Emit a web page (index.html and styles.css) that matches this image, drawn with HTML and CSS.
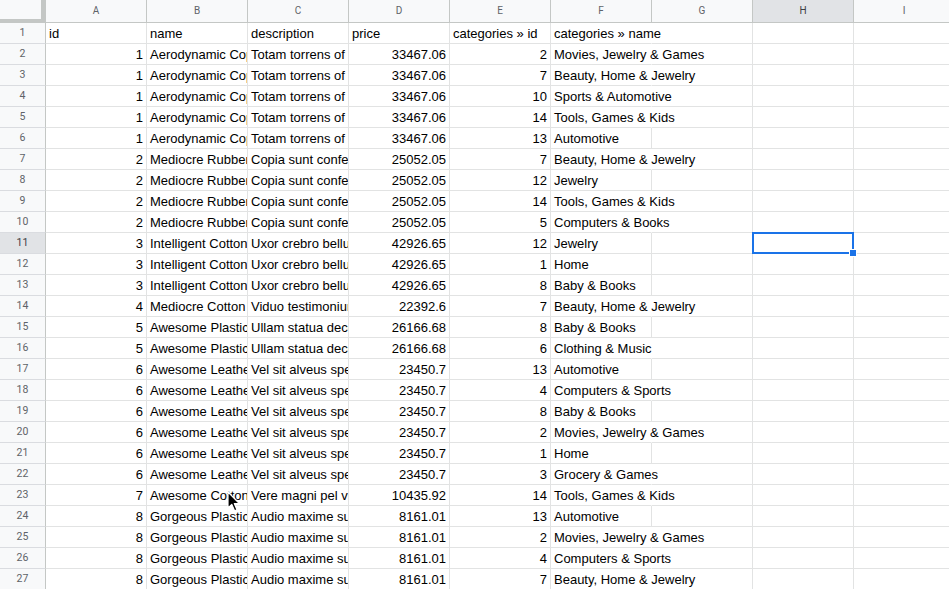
FILE: index.html
```html
<!DOCTYPE html>
<html>
<head>
<meta charset="utf-8">
<link rel="stylesheet" href="styles.css">
</head>
<body>
<div class="sheet">
  <div class="hrow">
    <div class="corner"></div>
    <div class="ch">A</div><div class="ch">B</div><div class="ch">C</div><div class="ch">D</div><div class="ch">E</div><div class="ch">F</div><div class="ch">G</div><div class="ch sel">H</div><div class="ch">I</div>
  </div>
  <div class="row"><div class="rh">1</div><div class="c">id</div><div class="c">name</div><div class="c">description</div><div class="c">price</div><div class="c">categories » id</div><div class="c sp">categories » name</div><div class="c"></div><div class="c"></div><div class="c"></div></div>
  <div class="row"><div class="rh">2</div><div class="c n">1</div><div class="c">Aerodynamic Copper Table</div><div class="c">Totam torrens of vel</div><div class="c n">33467.06</div><div class="c n">2</div><div class="c sp">Movies, Jewelry &amp; Games</div><div class="c"></div><div class="c"></div><div class="c"></div></div>
  <div class="row"><div class="rh">3</div><div class="c n">1</div><div class="c">Aerodynamic Copper Table</div><div class="c">Totam torrens of vel</div><div class="c n">33467.06</div><div class="c n">7</div><div class="c sp">Beauty, Home &amp; Jewelry</div><div class="c"></div><div class="c"></div><div class="c"></div></div>
  <div class="row"><div class="rh">4</div><div class="c n">1</div><div class="c">Aerodynamic Copper Table</div><div class="c">Totam torrens of vel</div><div class="c n">33467.06</div><div class="c n">10</div><div class="c sp">Sports &amp; Automotive</div><div class="c"></div><div class="c"></div><div class="c"></div></div>
  <div class="row"><div class="rh">5</div><div class="c n">1</div><div class="c">Aerodynamic Copper Table</div><div class="c">Totam torrens of vel</div><div class="c n">33467.06</div><div class="c n">14</div><div class="c sp">Tools, Games &amp; Kids</div><div class="c"></div><div class="c"></div><div class="c"></div></div>
  <div class="row"><div class="rh">6</div><div class="c n">1</div><div class="c">Aerodynamic Copper Table</div><div class="c">Totam torrens of vel</div><div class="c n">33467.06</div><div class="c n">13</div><div class="c">Automotive</div><div class="c"></div><div class="c"></div><div class="c"></div></div>
  <div class="row"><div class="rh">7</div><div class="c n">2</div><div class="c">Mediocre Rubber Bag</div><div class="c">Copia sunt confero</div><div class="c n">25052.05</div><div class="c n">7</div><div class="c sp">Beauty, Home &amp; Jewelry</div><div class="c"></div><div class="c"></div><div class="c"></div></div>
  <div class="row"><div class="rh">8</div><div class="c n">2</div><div class="c">Mediocre Rubber Bag</div><div class="c">Copia sunt confero</div><div class="c n">25052.05</div><div class="c n">12</div><div class="c">Jewelry</div><div class="c"></div><div class="c"></div><div class="c"></div></div>
  <div class="row"><div class="rh">9</div><div class="c n">2</div><div class="c">Mediocre Rubber Bag</div><div class="c">Copia sunt confero</div><div class="c n">25052.05</div><div class="c n">14</div><div class="c sp">Tools, Games &amp; Kids</div><div class="c"></div><div class="c"></div><div class="c"></div></div>
  <div class="row"><div class="rh">10</div><div class="c n">2</div><div class="c">Mediocre Rubber Bag</div><div class="c">Copia sunt confero</div><div class="c n">25052.05</div><div class="c n">5</div><div class="c sp">Computers &amp; Books</div><div class="c"></div><div class="c"></div><div class="c"></div></div>
  <div class="row"><div class="rh sel">11</div><div class="c n">3</div><div class="c">Intelligent Cotton Pants</div><div class="c">Uxor crebro bellum</div><div class="c n">42926.65</div><div class="c n">12</div><div class="c">Jewelry</div><div class="c"></div><div class="c"></div><div class="c"></div></div>
  <div class="row"><div class="rh">12</div><div class="c n">3</div><div class="c">Intelligent Cotton Pants</div><div class="c">Uxor crebro bellum</div><div class="c n">42926.65</div><div class="c n">1</div><div class="c">Home</div><div class="c"></div><div class="c"></div><div class="c"></div></div>
  <div class="row"><div class="rh">13</div><div class="c n">3</div><div class="c">Intelligent Cotton Pants</div><div class="c">Uxor crebro bellum</div><div class="c n">42926.65</div><div class="c n">8</div><div class="c">Baby &amp; Books</div><div class="c"></div><div class="c"></div><div class="c"></div></div>
  <div class="row"><div class="rh">14</div><div class="c n">4</div><div class="c">Mediocre Cotton Shirt</div><div class="c">Viduo testimonium</div><div class="c n">22392.6</div><div class="c n">7</div><div class="c sp">Beauty, Home &amp; Jewelry</div><div class="c"></div><div class="c"></div><div class="c"></div></div>
  <div class="row"><div class="rh">15</div><div class="c n">5</div><div class="c">Awesome Plastic Car</div><div class="c">Ullam statua decor</div><div class="c n">26166.68</div><div class="c n">8</div><div class="c">Baby &amp; Books</div><div class="c"></div><div class="c"></div><div class="c"></div></div>
  <div class="row"><div class="rh">16</div><div class="c n">5</div><div class="c">Awesome Plastic Car</div><div class="c">Ullam statua decor</div><div class="c n">26166.68</div><div class="c n">6</div><div class="c sp">Clothing &amp; Music</div><div class="c"></div><div class="c"></div><div class="c"></div></div>
  <div class="row"><div class="rh">17</div><div class="c n">6</div><div class="c">Awesome Leather Hat</div><div class="c">Vel sit alveus spes</div><div class="c n">23450.7</div><div class="c n">13</div><div class="c">Automotive</div><div class="c"></div><div class="c"></div><div class="c"></div></div>
  <div class="row"><div class="rh">18</div><div class="c n">6</div><div class="c">Awesome Leather Hat</div><div class="c">Vel sit alveus spes</div><div class="c n">23450.7</div><div class="c n">4</div><div class="c sp">Computers &amp; Sports</div><div class="c"></div><div class="c"></div><div class="c"></div></div>
  <div class="row"><div class="rh">19</div><div class="c n">6</div><div class="c">Awesome Leather Hat</div><div class="c">Vel sit alveus spes</div><div class="c n">23450.7</div><div class="c n">8</div><div class="c">Baby &amp; Books</div><div class="c"></div><div class="c"></div><div class="c"></div></div>
  <div class="row"><div class="rh">20</div><div class="c n">6</div><div class="c">Awesome Leather Hat</div><div class="c">Vel sit alveus spes</div><div class="c n">23450.7</div><div class="c n">2</div><div class="c sp">Movies, Jewelry &amp; Games</div><div class="c"></div><div class="c"></div><div class="c"></div></div>
  <div class="row"><div class="rh">21</div><div class="c n">6</div><div class="c">Awesome Leather Hat</div><div class="c">Vel sit alveus spes</div><div class="c n">23450.7</div><div class="c n">1</div><div class="c">Home</div><div class="c"></div><div class="c"></div><div class="c"></div></div>
  <div class="row"><div class="rh">22</div><div class="c n">6</div><div class="c">Awesome Leather Hat</div><div class="c">Vel sit alveus spes</div><div class="c n">23450.7</div><div class="c n">3</div><div class="c sp">Grocery &amp; Games</div><div class="c"></div><div class="c"></div><div class="c"></div></div>
  <div class="row"><div class="rh">23</div><div class="c n">7</div><div class="c">Awesome Cotton Chair</div><div class="c">Vere magni pel vir</div><div class="c n">10435.92</div><div class="c n">14</div><div class="c sp">Tools, Games &amp; Kids</div><div class="c"></div><div class="c"></div><div class="c"></div></div>
  <div class="row"><div class="rh">24</div><div class="c n">8</div><div class="c">Gorgeous Plastic Lamp</div><div class="c">Audio maxime sumo</div><div class="c n">8161.01</div><div class="c n">13</div><div class="c">Automotive</div><div class="c"></div><div class="c"></div><div class="c"></div></div>
  <div class="row"><div class="rh">25</div><div class="c n">8</div><div class="c">Gorgeous Plastic Lamp</div><div class="c">Audio maxime sumo</div><div class="c n">8161.01</div><div class="c n">2</div><div class="c sp">Movies, Jewelry &amp; Games</div><div class="c"></div><div class="c"></div><div class="c"></div></div>
  <div class="row"><div class="rh">26</div><div class="c n">8</div><div class="c">Gorgeous Plastic Lamp</div><div class="c">Audio maxime sumo</div><div class="c n">8161.01</div><div class="c n">4</div><div class="c sp">Computers &amp; Sports</div><div class="c"></div><div class="c"></div><div class="c"></div></div>
  <div class="row"><div class="rh">27</div><div class="c n">8</div><div class="c">Gorgeous Plastic Lamp</div><div class="c">Audio maxime sumo</div><div class="c n">8161.01</div><div class="c n">7</div><div class="c sp">Beauty, Home &amp; Jewelry</div><div class="c"></div><div class="c"></div><div class="c"></div></div>

  <div class="selbox"><div class="handle"></div></div>
  <svg class="cursor" width="14" height="22" viewBox="0 0 14 22">
    <path d="M1 1 L1 17 L4.8 13.4 L7.6 19.8 L10 18.8 L7.3 12.6 L12.4 12.6 Z" fill="#000" stroke="#fff" stroke-width="1.2" stroke-linejoin="round"/>
  </svg>
</div>
</body>
</html>
```
FILE: styles.css
```css
* { box-sizing: border-box; }
html, body {
  margin: 0;
  padding: 0;
  background: #fff;
  overflow: hidden;
}
body {
  width: 949px;
  height: 589px;
}
.sheet {
  position: relative;
  width: 955px;
  font-family: "Liberation Sans", Arial, sans-serif;
}
.hrow {
  display: flex;
  height: 23px;
}
.corner {
  flex: 0 0 46px;
  height: 23px;
  background: #f8f9fa;
  border-right: 5px solid #c4c7c5;
  border-bottom: 4px solid #c4c7c5;
}
.ch {
  flex: 0 0 101px;
  min-width: 0;
  height: 23px;
  background: #f8f9fa;
  border-right: 1px solid #c4c7c5;
  border-bottom: 1px solid #c4c7c5;
  color: #5f6368;
  font-family: Roboto, "Liberation Sans", Arial, sans-serif;
  font-size: 10px;
  line-height: 22px;
  text-align: center;
}
.ch.sel {
  background: #e1e3e6;
  color: #3c4043;
}
.row {
  display: flex;
  height: 21px;
}
.rh {
  flex: 0 0 46px;
  height: 21px;
  background: #f8f9fa;
  border-right: 1px solid #c4c7c5;
  border-bottom: 1px solid #dadce0;
  color: #5f6368;
  font-family: Roboto, "Liberation Sans", Arial, sans-serif;
  font-size: 10.5px;
  line-height: 20px;
  text-align: center;
}
.rh.sel {
  background: #e1e3e6;
  color: #3c4043;
}
.c {
  flex: 0 0 101px;
  min-width: 0;
  max-width: 101px;
  height: 21px;
  border-right: 1px solid #e2e3e3;
  border-bottom: 1px solid #e2e3e3;
  font-size: 13px;
  line-height: 20px;
  padding: 1px 3px 0 3px;
  color: #000;
  white-space: nowrap;
  overflow: hidden;
}
.c.n {
  text-align: right;
}
.c.sp {
  overflow: visible;
  border-right-color: transparent;
}
.selbox {
  position: absolute;
  left: 752px;
  top: 232px;
  width: 102px;
  height: 22px;
  border: 2px solid #1a73e8;
}
.handle {
  position: absolute;
  right: -4px;
  bottom: -4px;
  width: 6px;
  height: 6px;
  background: #1a73e8;
  border: 1px solid #fff;
  box-sizing: content-box;
  margin: -1px;
}
.cursor {
  position: absolute;
  left: 227px;
  top: 491px;
}
```
